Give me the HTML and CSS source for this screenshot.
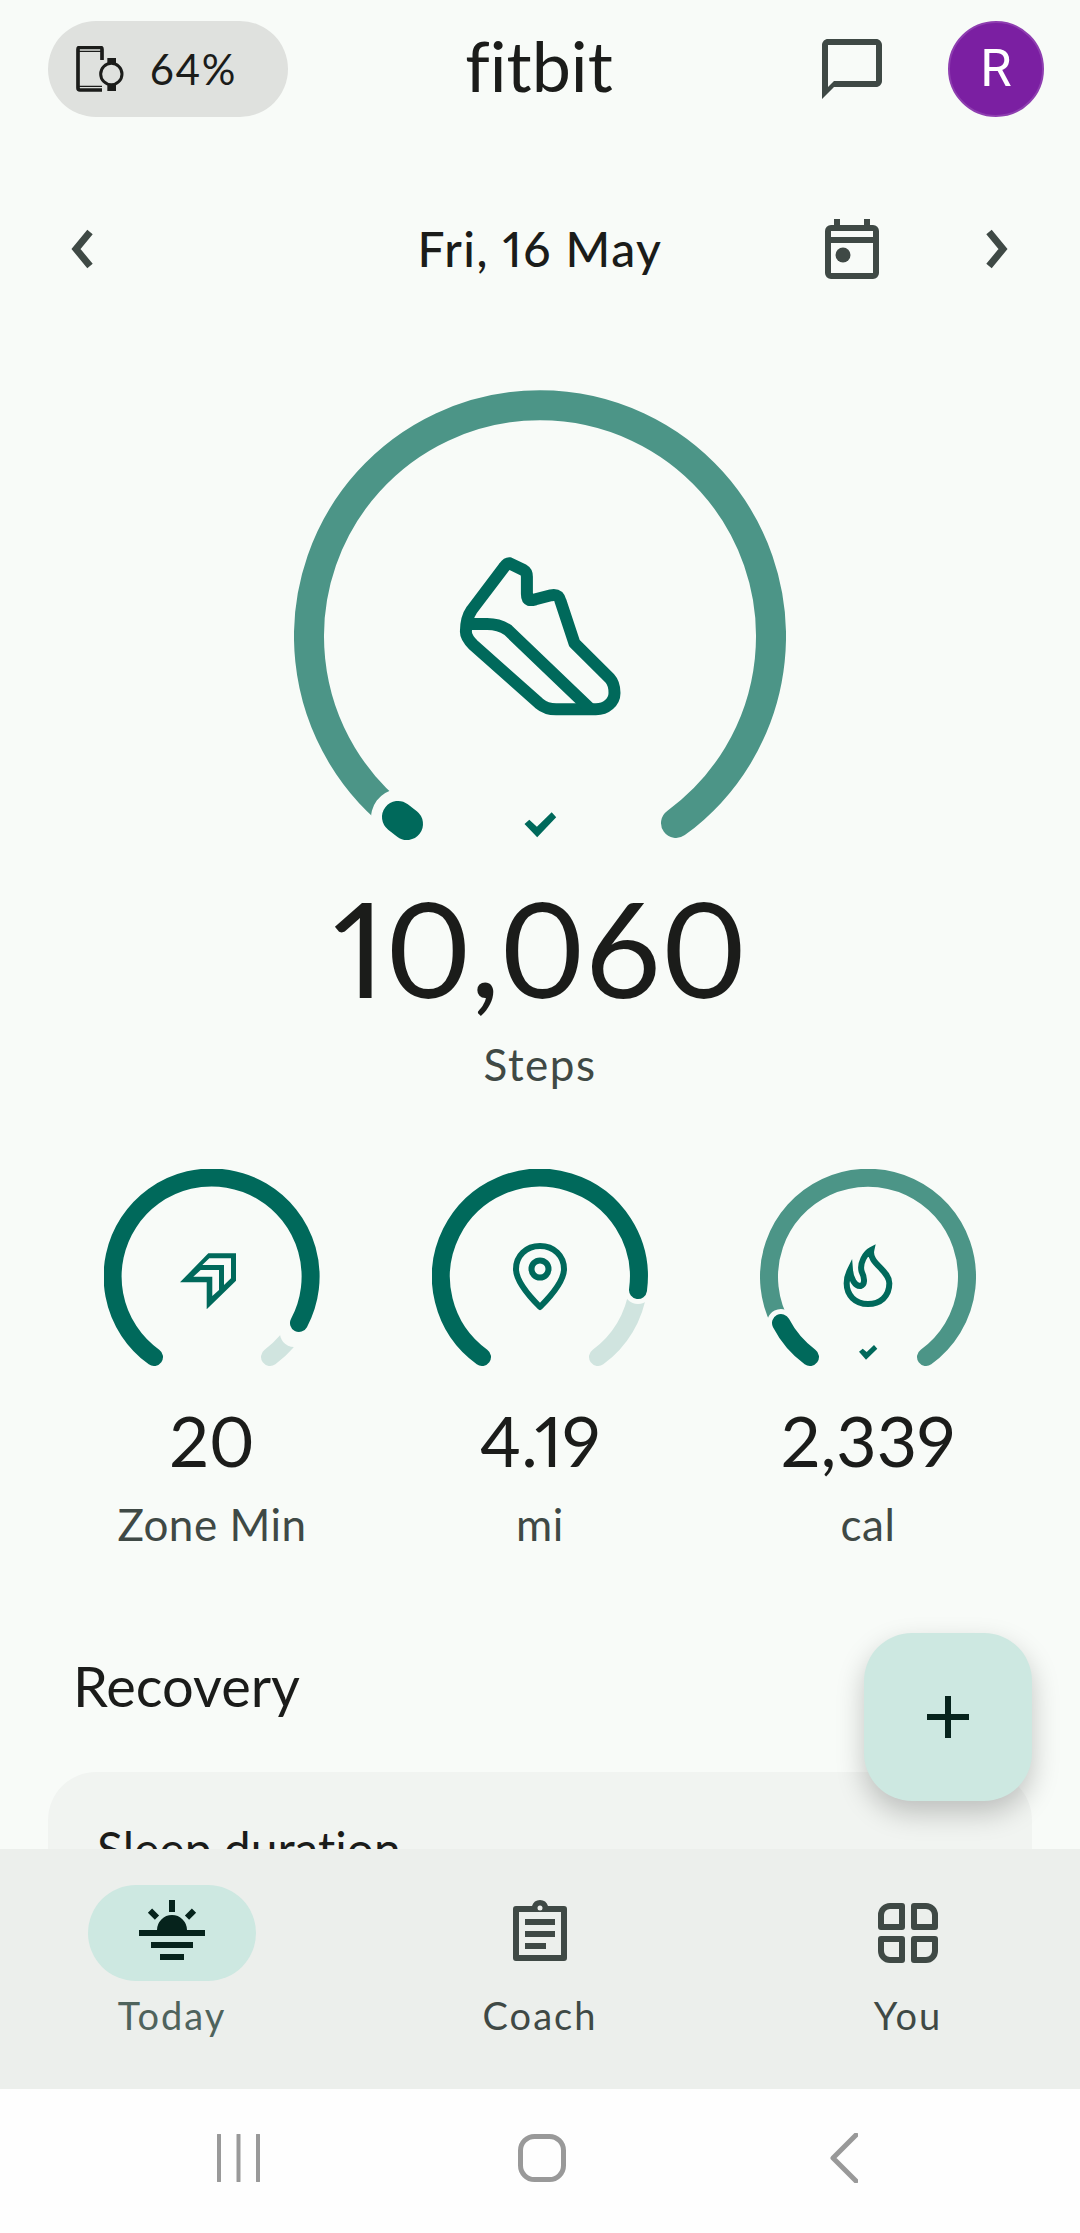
FILE: index.html
```html
<!DOCTYPE html>
<html lang="en">
<head>
<meta charset="utf-8">
<title>Fitbit Today</title>
<link rel="stylesheet" href="styles.css">
</head>
<body>
<div class="app">
  <main class="screen">
    <header class="topbar">
      <div class="battery">
        <svg class="battery-icon" viewBox="108 108 144 138" width="48" height="46">
          <path class="phone" d="M186 150V118q0-6-6-6H120q-6 0-6 6V234q0 6 6 6H186"/>
          <path class="phone-thin" d="M116 124H186M116 229H186"/>
          <circle class="watch" cx="214" cy="192" r="32"/>
          <path class="watch-band" d="M202 144H228V162H202ZM202 224H228V243H202Z"/>
        </svg>
        <span class="battery-text">64%</span>
      </div>
      <div class="logo">fitbit</div>
      <div class="top-actions">
        <svg class="icon-72" viewBox="0 0 24 24" width="72" height="72"><path d="M20 2H4c-1.1 0-2 .9-2 2v18l4-4h14c1.1 0 2-.9 2-2V4c0-1.1-.9-2-2-2zm0 14H6l-2 2V4h16v12z"/></svg>
        <div class="avatar">R</div>
      </div>
    </header>

    <div class="daterow">
      <svg class="chev chev-left" viewBox="0 0 24 40" width="24" height="40"><path d="M19 3L5 20L19 37"/></svg>
      <div class="date">Fri, 16 May</div>
      <svg class="calendar" viewBox="0 0 54 60" width="54" height="60">
        <path class="cal-line" d="M12 0V8M42 0V8M0 21H54"/>
        <rect class="cal-box" x="3" y="9" width="48" height="48" rx="3"/>
        <circle class="cal-dot" cx="18" cy="36" r="7.5"/>
      </svg>
      <svg class="chev chev-right" viewBox="0 0 24 40" width="24" height="40"><path d="M5 3L19 20L5 37"/></svg>
    </div>

    <section class="steps">
      <svg class="big-ring" viewBox="0 0 492 460" width="492" height="460">
        <path class="arc arc-light" stroke-width="30" d="M110 433A231 231 0 1 1 382 433"/>
        <path class="arc arc-gap" stroke-width="58" d="M110 431L106 428"/>
        <path class="arc arc-dark" stroke-width="32" d="M113 434L104 427"/>
        <polygon class="tick" points="230.5,434 235.3,429.7 242.9,436.7 257.7,422.3 262.2,427.3 243.2,447.3"/>
        <path class="shoe" d="M215.7 173.3L229.4 180Q232.9 182 232.9 186.7V204C232.9 211.7 237 210.5 241.5 209.3L257 205.3C263.9 204 265.5 207 266.7 211.7L280.5 253.3L315.7 288.3C320 293 320.5 298 320.5 303C320.5 312 312.2 319.3 301.9 319.3H262.2C255 319.3 250 317.5 245 313.3L179.4 255C174 249.5 171.9 246 171.9 241.7C171.9 232 173.5 226 177.7 220L210.5 176.7Q213 173 215.7 173.3Z"/>
        <path class="shoe" d="M174.3 234H193.2C203 234 208 236 213.9 240L296.7 319.3"/>
      </svg>
      <div class="big-number">10,060</div>
      <div class="big-label">Steps</div>
    </section>

    <section class="metrics">
      <div class="metric">
        <svg class="small-ring" viewBox="0 0 216 198" width="216" height="198">
          <path class="arc arc-pale" stroke-width="18" d="M195 154A99 99 0 0 1 166 188"/>
          <path class="arc arc-gap" stroke-width="28" d="M190 164L195 154"/>
          <path class="arc arc-dark" stroke-width="18" d="M50 188A99 99 0 1 1 195 154"/>
          <path class="zone-fill" fill-rule="evenodd" d="M76 113.3L104.3 84.3H132V111.7L102.7 140.3V113.3ZM98.3 96L105.3 89.3H127V109.3L120 116V96ZM89.3 107.7L96.7 101H115V121L108.3 127V107.7Z"/>
        </svg>
        <div class="metric-value">20</div>
        <div class="metric-label">Zone Min</div>
      </div>
      <div class="metric">
        <svg class="small-ring" viewBox="0 0 216 198" width="216" height="198">
          <path class="arc arc-pale" stroke-width="18" d="M206 121A99 99 0 0 1 166 188"/>
          <path class="arc arc-gap" stroke-width="28" d="M206 115L206 121"/>
          <path class="arc arc-dark" stroke-width="18" d="M50 188A99 99 0 1 1 206 121"/>
          <path class="shoe thin" d="M108 77C94 77 84 87 84 100C84 113 98 128 108 138C118 128 132 113 132 100C132 87 122 77 108 77Z"/>
          <circle class="shoe thin" cx="108" cy="100" r="8.5"/>
        </svg>
        <div class="metric-value">4.19</div>
        <div class="metric-label">mi</div>
      </div>
      <div class="metric">
        <svg class="small-ring" viewBox="0 0 216 198" width="216" height="198">
          <path class="arc arc-light" stroke-width="18" d="M50 188A99 99 0 1 1 166 188"/>
          <path class="arc arc-gap" stroke-width="28" d="M21 154A99 99 0 0 0 50 188"/>
          <path class="arc arc-dark" stroke-width="18" d="M21 154A99 99 0 0 0 50 188"/>
          <polygon class="tick" points="99,182.7 102.7,179.7 106.7,183 114,176 117.3,179.7 106,190.7"/>
          <g transform="translate(-220 -19) scale(.33333)">
            <path class="flame" d="M994 300C985 340 1048 360 1048 400C1048 440 1020 462 984 462C945 462 920 435 920 400C920 385 925 370 930 360C932 385 945 410 962 408C975 405 975 385 965 365C958 340 975 310 994 300Z"/>
          </g>
        </svg>
        <div class="metric-value">2,339</div>
        <div class="metric-label">cal</div>
      </div>
    </section>

    <h2 class="section-title">Recovery</h2>
    <div class="card"><div class="card-title">Sleep duration</div></div>

    <button class="fab" aria-label="Add">
      <svg viewBox="0 0 42 42" width="42" height="42"><path d="M18 0H24V18H42V24H24V42H18V24H0V18H18Z"/></svg>
    </button>
  </main>

  <nav class="tabs">
    <div class="tab">
      <div class="tab-pill active">
        <svg viewBox="0 0 66 60" width="66" height="60" class="sun">
          <rect x="30" y="0" width="6" height="12"/>
          <path class="sun-ray" d="M11 10.7L18 17.7M55 10.7L48 17.7"/>
          <path d="M18 30A15 15 0 0 1 48 30H66V36H0V30Z"/>
          <rect x="12" y="42" width="42" height="6"/>
          <rect x="21" y="54" width="24" height="6"/>
        </svg>
      </div>
      <div class="tab-label current">Today</div>
    </div>
    <div class="tab">
      <div class="tab-pill">
        <svg viewBox="0 0 54 61" width="54" height="61" class="nav-icon">
          <path fill-rule="evenodd" d="M27 0A8.5 8.5 0 0 1 35 6H51Q54 6 54 9V58Q54 61 51 61H3Q0 61 0 58V9Q0 6 3 6H19A8.500 8.500 0 0 1 27 0ZM27 5.500A2.500 2.500 0 1 0 27 10.500A2.500 2.500 0 1 0 27 5.500ZM6 12V55H48V12ZM12 19H42V25H12ZM12 31H42V37H12ZM12 43H33V49H12Z"/>
        </svg>
      </div>
      <div class="tab-label">Coach</div>
    </div>
    <div class="tab">
      <div class="tab-pill">
        <svg viewBox="0 0 60 60" width="60" height="60" class="you">
          <path d="M24 3V24H3V12A9 9 0 0 1 12 3Z"/>
          <path d="M36 3V24H57V12A9 9 0 0 0 48 3Z"/>
          <path d="M24 57V36H3V48A9 9 0 0 0 12 57Z"/>
          <path d="M36 57V36H57V48A9 9 0 0 1 48 57Z"/>
        </svg>
      </div>
      <div class="tab-label">You</div>
    </div>
  </nav>

  <footer class="sysnav">
    <svg viewBox="0 0 44 48" width="44" height="48" class="sys"><path d="M2 1V47M21.500 1V47M41 1V47"/></svg>
    <svg viewBox="0 0 48 48" width="48" height="48" class="sys sys-home"><rect x="2.500" y="2.500" width="43" height="43" rx="14"/></svg>
    <svg viewBox="0 0 28 50" width="28" height="50" class="sys sys-back"><path d="M26 2L3 25L26 48"/></svg>
  </footer>
</div>
</body>
</html>
```

FILE: styles.css
```css
* { box-sizing: border-box; }
html, body { margin: 0; padding: 0; }
body { width: 1080px; height: 2233px; overflow: hidden; font-family: "Lato", "Noto Sans", sans-serif; color: #1b1c1a; font-variant-numeric: proportional-nums; font-variant-ligatures: none; }
svg { display: block; }
.app { width: 1080px; height: 2233px; display: flex; flex-direction: column; background: #f8fbf8; }
.screen { position: relative; height: 1849px; overflow: hidden; flex: none; }

.topbar { display: grid; grid-template-columns: 1fr auto 1fr; align-items: center; padding: 21px 36px 0 48px; height: 117px; }
.battery { width: 240px; height: 96px; border-radius: 48px; background: #dfe1de; display: flex; align-items: center; padding-left: 28px; gap: 26px; }
.battery-text { font-size: 42px; letter-spacing: 1.5px; line-height: 1; }
.phone { fill: none; stroke: #1b1c1a; stroke-width: 11; }
.phone-thin { fill: none; stroke: #1b1c1a; stroke-width: 4; }
.watch { fill: none; stroke: #1b1c1a; stroke-width: 9; }
.watch-band { fill: #1b1c1a; }
.logo { font-size: 70px; line-height: 96px; transform: translate(-7px, -4px); }
.top-actions { display: flex; justify-content: flex-end; align-items: center; gap: 60px; }
.icon-72 path { fill: #3f4945; }
.avatar { width: 96px; height: 96px; border-radius: 50%; background: #7b1fa2; border: 2px solid #8e3eb0; color: #fff; font-family: "Roboto", sans-serif; font-size: 51px; line-height: 92px; text-align: center; }

.daterow { position: relative; display: flex; align-items: center; justify-content: center; height: 60px; margin-top: 102px; padding: 0 72px; }
.date { font-size: 48px; line-height: 60px; font-weight: 500; letter-spacing: 1.5px; }
.chev path { fill: none; stroke: #3f4945; stroke-width: 7; }
.chev-left { position: absolute; left: 71px; top: 10px; }
.chev-right { position: absolute; left: 984px; top: 10px; }
.calendar { position: absolute; left: 825px; top: 0; }
.cal-line { fill: none; stroke: #3f4945; stroke-width: 6; }
.cal-box { fill: none; stroke: #3f4945; stroke-width: 6; }
.cal-dot { fill: #3f4945; }

.steps { margin-top: 111px; display: flex; flex-direction: column; align-items: center; }
.arc { fill: none; stroke-linecap: round; }
.arc-light { stroke: #4c9587; }
.arc-dark { stroke: #00695b; }
.arc-pale { stroke: #d0e4df; }
.arc-gap { stroke: #f8fbf8; }
.tick, .zone-fill { fill: #00695b; }
.shoe { fill: none; stroke: #00695b; stroke-width: 12; stroke-linejoin: round; }
.shoe.thin { stroke-width: 6; }
.flame { fill: none; stroke: #00695b; stroke-width: 18; stroke-linejoin: miter; }
.big-number { font-size: 132px; line-height: 140px; margin-top: 27px; }
.big-label { font-size: 44px; line-height: 50px; color: #3f4945; margin-top: 22px; letter-spacing: 1.5px; }

.metrics { display: flex; justify-content: center; gap: 112px; margin-top: 80px; }
.metric { width: 216px; display: flex; flex-direction: column; align-items: center; }
.metric-value { font-size: 70px; line-height: 84px; margin-top: 31px; }
.metric-label { font-size: 44px; line-height: 50px; color: #3f4945; margin-top: 17px; letter-spacing: .5px; white-space: nowrap; }

.section-title { margin: 102px 0 0 73px; font-size: 56px; line-height: 70px; font-weight: 400; }
.card { margin: 51px 48px 0; height: 200px; border-radius: 48px; background: #f1f4f1; padding: 47px 49px 0; }
.card-title { font-size: 48px; line-height: 60px; }

.fab { position: absolute; left: 864px; top: 1633px; width: 168px; height: 168px; border: 0; border-radius: 48px; background: #cde8e1; box-shadow: 0 12px 28px rgba(0,0,0,.22); display: flex; align-items: center; justify-content: center; padding: 0; }
.fab path { fill: #06231c; }

.tabs { height: 240px; flex: none; background: #ecefec; display: flex; justify-content: space-between; padding: 36px 88px 0; }
.tab { width: 168px; display: flex; flex-direction: column; align-items: center; }
.tab-pill { width: 168px; height: 96px; border-radius: 48px; display: flex; align-items: center; justify-content: center; }
.tab-pill.active { background: #cde8e1; }
.tab-label { font-size: 38px; line-height: 44px; margin-top: 12px; color: #3f4945; letter-spacing: 2px; }
.tab-label.current { color: #4f635c; }
.sun rect, .sun path { fill: #06231c; }
.sun { margin-bottom: 6px; }
.nav-icon { margin-bottom: 6px; }
.sun .sun-ray { fill: none; stroke: #06231c; stroke-width: 6; }
.nav-icon path { fill: #3f4945; }
.you path { fill: none; stroke: #3f4945; stroke-width: 6; stroke-linejoin: round; }

.sysnav { flex: 1; background: #fefefe; display: flex; align-items: center; justify-content: space-between; padding: 0 222px 6px 217px; }
.sys path { fill: none; stroke: #999; stroke-width: 4; stroke-linecap: round; stroke-linejoin: round; }
.sys-home { margin-right: 8px; }
.sys-home rect { fill: none; stroke: #999; stroke-width: 5; }
.sys-back path { stroke-width: 5; }
```
